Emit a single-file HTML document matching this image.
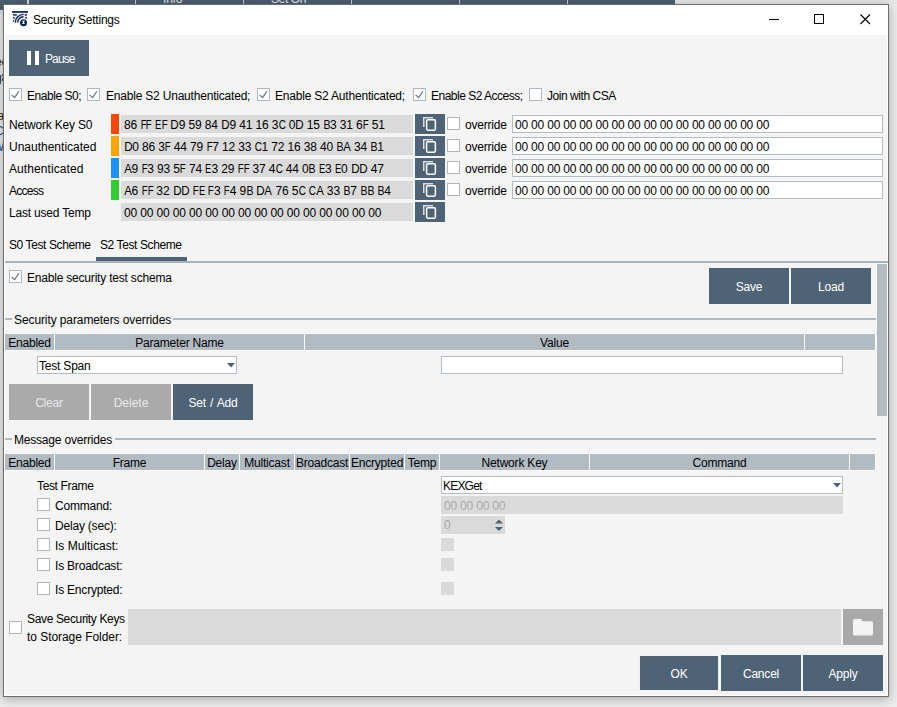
<!DOCTYPE html>
<html><head><meta charset="utf-8">
<style>
*{box-sizing:border-box;margin:0;padding:0}
html,body{width:897px;height:707px;overflow:hidden;background:#ececec;font-family:"Liberation Sans",sans-serif;font-size:11.5px;color:#000}
.a{position:absolute}
.t{position:absolute;white-space:pre;line-height:16px;font-size:12px;letter-spacing:-0.2px;margin-top:1px}
.cb{position:absolute;width:13px;height:13px;border:1px solid #aeb6be;background:#fff}
.c{position:absolute;white-space:pre;line-height:16px;text-align:center;overflow:hidden;font-size:12px;letter-spacing:-0.2px;margin-top:1px}
</style></head><body>

<div class="a" style="left:0px;top:0px;width:675px;height:4px;background:#4b5f72;"></div>
<div class="a" style="left:0px;top:0px;width:3px;height:10px;background:#4b5f72;"></div>
<div class="a" style="left:675px;top:0px;width:222px;height:4px;background:#e6e6e6;"></div>
<div class="a" style="left:27px;top:0px;width:2px;height:4px;background:#d8dde2;"></div>
<div class="a" style="left:135px;top:0px;width:1px;height:4px;background:#c8d0d8;"></div>
<div class="a" style="left:243px;top:0px;width:1px;height:4px;background:#c8d0d8;"></div>
<div class="a" style="left:351px;top:0px;width:1px;height:4px;background:#c8d0d8;"></div>
<div class="a" style="left:459px;top:0px;width:1px;height:4px;background:#c8d0d8;"></div>
<div class="a" style="left:567px;top:0px;width:1px;height:4px;background:#c8d0d8;"></div>
<div class="a" style="left:0;top:0;width:675px;height:4px;overflow:hidden"><div class="t" style="left:163px;top:-10px;color:#e3e8ec">Info</div><div class="t" style="left:271px;top:-10px;color:#e3e8ec;letter-spacing:-0.4px">Set On</div></div>
<div class="a" style="left:0px;top:10px;width:3px;height:4px;background:#dedede;"></div>
<div class="a" style="left:0;top:0;width:3px;height:707px;overflow:hidden"><div class="t" style="left:-5px;top:53px;color:#1a1a1a">ec</div><div class="t" style="left:-5px;top:69px;color:#1a1a1a">g8</div><div class="t" style="left:-5px;top:107px;color:#1a1a1a">la</div><div class="t" style="left:-5px;top:122px;color:#1f4e9a">C0</div><div class="t" style="left:-7px;top:138px;color:#1f4e9a">W</div></div>
<div class="a" style="left:3px;top:4px;width:886px;height:693px;background:#f4f4f4;border:1px solid #6e6e6e;box-shadow:0 2px 10px rgba(0,0,0,0.3)"></div>
<div class="a" style="left:4px;top:5px;width:884px;height:30px;background:#fff;"></div>
<div class="a" style="left:4px;top:35px;width:1px;height:660px;background:#fff;"></div>
<div class="a" style="left:4px;top:695px;width:884px;height:1px;background:#fff;"></div>
<div class="a" style="left:887px;top:35px;width:1px;height:660px;background:#fff;"></div>
<svg class="a" style="left:12px;top:11px" width="17" height="16" viewBox="0 0 17 16">
 <rect x="0.2" y="2" width="15.3" height="10.7" fill="#ebebeb"/>
 <rect x="0" y="0.1" width="16" height="1.7" fill="#0c2250"/>
 <rect x="1" y="3.2" width="3.8" height="1.4" fill="#0c2250"/>
 <rect x="12.7" y="3.2" width="2.3" height="1.4" fill="#0c2250"/>
 <rect x="1" y="6.2" width="1.7" height="1.4" fill="#0c2250"/>
 <rect x="13" y="6.2" width="2" height="1.4" fill="#0c2250"/>
 <rect x="1" y="9.2" width="1" height="1.5" fill="#0c2250"/>
 <path d="M3.3 11.6 A8.2 8.2 0 0 1 11.5 3.4" stroke="#0c2250" stroke-width="1.4" fill="none"/>
 <path d="M5.6 11.6 A5.9 5.9 0 0 1 11.5 5.7" stroke="#0c2250" stroke-width="1.4" fill="none"/>
 <circle cx="11.5" cy="11.65" r="4.4" fill="#fff"/>
 <circle cx="11.5" cy="11.65" r="3.5" fill="#0c2250"/>
 <path d="M9.9 9.7 H13.1 L11.9 11.4 L13.1 13.1 H9.9 L11.1 11.4z" fill="#fff"/>
</svg>
<div class="t" style="left:33px;top:11px;">Security Settings</div>
<div class="a" style="left:769px;top:19px;width:10px;height:1px;background:#000;"></div>
<div class="a" style="left:814px;top:14px;width:10px;height:10px;border:1px solid #000"></div>
<svg class="a" style="left:860px;top:14px" width="11" height="11" viewBox="0 0 11 11"><path d="M0.5 0.5 L10 10 M10 0.5 L0.5 10" stroke="#000" stroke-width="1.1"/></svg>
<div class="a" style="left:9px;top:40px;width:80px;height:36px;background:#4f6377;"></div>
<div class="a" style="left:27px;top:51px;width:4px;height:14px;background:#fff;"></div>
<div class="a" style="left:35px;top:51px;width:4px;height:14px;background:#fff;"></div>
<div class="t" style="left:45px;top:50px;color:#fff;letter-spacing:-0.9px">Pause</div>
<div class="cb" style="left:9px;top:88px"><svg width="11" height="11" style="position:absolute;left:0;top:0"><path d="M1.6 5.9 L4.6 8.6 L8.9 2.2" stroke="#5f7081" stroke-width="1.15" fill="none"/></svg></div>
<div class="t" style="left:27px;top:87px;letter-spacing:-0.45px">Enable S0;</div>
<div class="cb" style="left:87px;top:88px"><svg width="11" height="11" style="position:absolute;left:0;top:0"><path d="M1.6 5.9 L4.6 8.6 L8.9 2.2" stroke="#5f7081" stroke-width="1.15" fill="none"/></svg></div>
<div class="t" style="left:106px;top:87px;">Enable S2 Unauthenticated;</div>
<div class="cb" style="left:257px;top:88px"><svg width="11" height="11" style="position:absolute;left:0;top:0"><path d="M1.6 5.9 L4.6 8.6 L8.9 2.2" stroke="#5f7081" stroke-width="1.15" fill="none"/></svg></div>
<div class="t" style="left:275px;top:87px;">Enable S2 Authenticated;</div>
<div class="cb" style="left:413px;top:88px"><svg width="11" height="11" style="position:absolute;left:0;top:0"><path d="M1.6 5.9 L4.6 8.6 L8.9 2.2" stroke="#5f7081" stroke-width="1.15" fill="none"/></svg></div>
<div class="t" style="left:431px;top:87px;letter-spacing:-0.5px">Enable S2 Access;</div>
<div class="cb" style="left:529px;top:88px"></div>
<div class="t" style="left:547px;top:87px;letter-spacing:-0.45px">Join with CSA</div>
<div class="t" style="left:9px;top:116px;">Network Key S0</div>
<div class="a" style="left:111px;top:114px;width:8px;height:20px;background:#ff4500;"></div>
<div class="a" style="left:121px;top:115px;width:292px;height:18px;background:#dadada;"></div>
<div class="t" style="left:124px;top:116px;letter-spacing:0"><span style="position:absolute;left:-0.08px;top:0;">8</span><span style="position:absolute;left:6.43px;top:0;">6</span><span style="position:absolute;left:15.54px;top:0;transform:scaleX(0.805);transform-origin:3.67px 0;">F</span><span style="position:absolute;left:21.40px;top:0;transform:scaleX(0.805);transform-origin:3.67px 0;">F</span><span style="position:absolute;left:30.33px;top:0;transform:scaleX(0.775);transform-origin:4.00px 0;">E</span><span style="position:absolute;left:36.67px;top:0;transform:scaleX(0.805);transform-origin:3.67px 0;">F</span><span style="position:absolute;left:46.35px;top:0;transform:scaleX(0.969);transform-origin:4.33px 0;">D</span><span style="position:absolute;left:54.78px;top:0;">9</span><span style="position:absolute;left:64.55px;top:0;">5</span><span style="position:absolute;left:71.06px;top:0;">9</span><span style="position:absolute;left:80.83px;top:0;">8</span><span style="position:absolute;left:87.34px;top:0;">4</span><span style="position:absolute;left:97.02px;top:0;transform:scaleX(0.969);transform-origin:4.33px 0;">D</span><span style="position:absolute;left:105.45px;top:0;">9</span><span style="position:absolute;left:115.21px;top:0;">4</span><span style="position:absolute;left:121.73px;top:0;">1</span><span style="position:absolute;left:131.49px;top:0;">1</span><span style="position:absolute;left:138.01px;top:0;">6</span><span style="position:absolute;left:147.77px;top:0;">3</span><span style="position:absolute;left:153.60px;top:0;transform:scaleX(0.830);transform-origin:4.33px 0;">C</span><span style="position:absolute;left:164.69px;top:0;">0</span><span style="position:absolute;left:171.12px;top:0;transform:scaleX(0.969);transform-origin:4.33px 0;">D</span><span style="position:absolute;left:182.80px;top:0;">1</span><span style="position:absolute;left:189.31px;top:0;">5</span><span style="position:absolute;left:198.63px;top:0;transform:scaleX(0.874);transform-origin:4.00px 0;">B</span><span style="position:absolute;left:206.02px;top:0;">3</span><span style="position:absolute;left:215.79px;top:0;">3</span><span style="position:absolute;left:222.30px;top:0;">1</span><span style="position:absolute;left:232.07px;top:0;">6</span><span style="position:absolute;left:237.92px;top:0;transform:scaleX(0.805);transform-origin:3.67px 0;">F</span><span style="position:absolute;left:247.69px;top:0;">5</span><span style="position:absolute;left:254.20px;top:0;">1</span></div>
<div class="a" style="left:415px;top:114px;width:30px;height:20px;background:#4f6377"><svg width="30" height="20" style="position:absolute;left:0;top:0"><path d="M8.75 13 V3.75 H18" stroke="#fff" stroke-width="1.5" fill="none" opacity="0.78"/><rect x="11.6" y="5.85" width="8.8" height="10.3" rx="1.3" stroke="#fff" stroke-width="1.5" fill="none"/></svg></div>
<div class="cb" style="left:447px;top:117px"></div>
<div class="t" style="left:465px;top:116px;">override</div>
<div class="a" style="left:512px;top:115px;width:371px;height:18px;background:#fff;border:1px solid #b3bcc4"></div>
<div class="t" style="left:515px;top:116px;">00 00 00 00 00 00 00 00 00 00 00 00 00 00 00 00</div>
<div class="t" style="left:9px;top:138px;letter-spacing:0px">Unauthenticated</div>
<div class="a" style="left:111px;top:136px;width:8px;height:20px;background:#ffa500;"></div>
<div class="a" style="left:121px;top:137px;width:292px;height:18px;background:#dadada;"></div>
<div class="t" style="left:124px;top:138px;letter-spacing:0"><span style="position:absolute;left:-0.17px;top:0;transform:scaleX(0.969);transform-origin:4.33px 0;">D</span><span style="position:absolute;left:8.24px;top:0;">0</span><span style="position:absolute;left:17.99px;top:0;">8</span><span style="position:absolute;left:24.49px;top:0;">6</span><span style="position:absolute;left:34.24px;top:0;">3</span><span style="position:absolute;left:40.08px;top:0;transform:scaleX(0.805);transform-origin:3.67px 0;">F</span><span style="position:absolute;left:49.84px;top:0;">4</span><span style="position:absolute;left:56.34px;top:0;">4</span><span style="position:absolute;left:66.09px;top:0;">7</span><span style="position:absolute;left:72.59px;top:0;">9</span><span style="position:absolute;left:81.68px;top:0;transform:scaleX(0.805);transform-origin:3.67px 0;">F</span><span style="position:absolute;left:88.18px;top:0;">7</span><span style="position:absolute;left:97.93px;top:0;">1</span><span style="position:absolute;left:104.43px;top:0;">2</span><span style="position:absolute;left:114.19px;top:0;">3</span><span style="position:absolute;left:120.69px;top:0;">3</span><span style="position:absolute;left:129.75px;top:0;transform:scaleX(0.830);transform-origin:4.33px 0;">C</span><span style="position:absolute;left:137.57px;top:0;">1</span><span style="position:absolute;left:147.32px;top:0;">7</span><span style="position:absolute;left:153.82px;top:0;">2</span><span style="position:absolute;left:163.57px;top:0;">1</span><span style="position:absolute;left:170.07px;top:0;">6</span><span style="position:absolute;left:179.82px;top:0;">3</span><span style="position:absolute;left:186.32px;top:0;">8</span><span style="position:absolute;left:196.07px;top:0;">4</span><span style="position:absolute;left:202.57px;top:0;">0</span><span style="position:absolute;left:211.87px;top:0;transform:scaleX(0.874);transform-origin:4.00px 0;">B</span><span style="position:absolute;left:219.10px;top:0;transform:scaleX(0.950);transform-origin:4.00px 0;">A</span><span style="position:absolute;left:230.03px;top:0;">3</span><span style="position:absolute;left:236.53px;top:0;">4</span><span style="position:absolute;left:245.83px;top:0;transform:scaleX(0.874);transform-origin:4.00px 0;">B</span><span style="position:absolute;left:253.21px;top:0;">1</span></div>
<div class="a" style="left:415px;top:136px;width:30px;height:20px;background:#4f6377"><svg width="30" height="20" style="position:absolute;left:0;top:0"><path d="M8.75 13 V3.75 H18" stroke="#fff" stroke-width="1.5" fill="none" opacity="0.78"/><rect x="11.6" y="5.85" width="8.8" height="10.3" rx="1.3" stroke="#fff" stroke-width="1.5" fill="none"/></svg></div>
<div class="cb" style="left:447px;top:139px"></div>
<div class="t" style="left:465px;top:138px;">override</div>
<div class="a" style="left:512px;top:137px;width:371px;height:18px;background:#fff;border:1px solid #b3bcc4"></div>
<div class="t" style="left:515px;top:138px;">00 00 00 00 00 00 00 00 00 00 00 00 00 00 00 00</div>
<div class="t" style="left:9px;top:160px;letter-spacing:0.08px">Authenticated</div>
<div class="a" style="left:111px;top:158px;width:8px;height:20px;background:#1e90ff;"></div>
<div class="a" style="left:121px;top:159px;width:292px;height:18px;background:#dadada;"></div>
<div class="t" style="left:124px;top:160px;letter-spacing:0"><span style="position:absolute;left:-0.22px;top:0;transform:scaleX(0.950);transform-origin:4.00px 0;">A</span><span style="position:absolute;left:7.49px;top:0;">9</span><span style="position:absolute;left:16.62px;top:0;transform:scaleX(0.805);transform-origin:3.67px 0;">F</span><span style="position:absolute;left:23.14px;top:0;">3</span><span style="position:absolute;left:32.93px;top:0;">9</span><span style="position:absolute;left:39.46px;top:0;">3</span><span style="position:absolute;left:49.24px;top:0;">5</span><span style="position:absolute;left:55.11px;top:0;transform:scaleX(0.805);transform-origin:3.67px 0;">F</span><span style="position:absolute;left:64.90px;top:0;">7</span><span style="position:absolute;left:71.42px;top:0;">4</span><span style="position:absolute;left:80.37px;top:0;transform:scaleX(0.775);transform-origin:4.00px 0;">E</span><span style="position:absolute;left:87.38px;top:0;">3</span><span style="position:absolute;left:97.17px;top:0;">2</span><span style="position:absolute;left:103.69px;top:0;">9</span><span style="position:absolute;left:112.82px;top:0;transform:scaleX(0.805);transform-origin:3.67px 0;">F</span><span style="position:absolute;left:118.69px;top:0;transform:scaleX(0.805);transform-origin:3.67px 0;">F</span><span style="position:absolute;left:128.48px;top:0;">3</span><span style="position:absolute;left:135.00px;top:0;">7</span><span style="position:absolute;left:144.79px;top:0;">4</span><span style="position:absolute;left:150.63px;top:0;transform:scaleX(0.830);transform-origin:4.33px 0;">C</span><span style="position:absolute;left:161.74px;top:0;">4</span><span style="position:absolute;left:168.26px;top:0;">4</span><span style="position:absolute;left:178.05px;top:0;">0</span><span style="position:absolute;left:184.13px;top:0;transform:scaleX(0.874);transform-origin:4.00px 0;">B</span><span style="position:absolute;left:193.95px;top:0;transform:scaleX(0.775);transform-origin:4.00px 0;">E</span><span style="position:absolute;left:200.96px;top:0;">3</span><span style="position:absolute;left:209.90px;top:0;transform:scaleX(0.775);transform-origin:4.00px 0;">E</span><span style="position:absolute;left:216.91px;top:0;">0</span><span style="position:absolute;left:226.62px;top:0;transform:scaleX(0.969);transform-origin:4.33px 0;">D</span><span style="position:absolute;left:234.97px;top:0;transform:scaleX(0.969);transform-origin:4.33px 0;">D</span><span style="position:absolute;left:246.67px;top:0;">4</span><span style="position:absolute;left:253.20px;top:0;">7</span></div>
<div class="a" style="left:415px;top:158px;width:30px;height:20px;background:#4f6377"><svg width="30" height="20" style="position:absolute;left:0;top:0"><path d="M8.75 13 V3.75 H18" stroke="#fff" stroke-width="1.5" fill="none" opacity="0.78"/><rect x="11.6" y="5.85" width="8.8" height="10.3" rx="1.3" stroke="#fff" stroke-width="1.5" fill="none"/></svg></div>
<div class="cb" style="left:447px;top:161px"></div>
<div class="t" style="left:465px;top:160px;">override</div>
<div class="a" style="left:512px;top:159px;width:371px;height:18px;background:#fff;border:1px solid #b3bcc4"></div>
<div class="t" style="left:515px;top:160px;">00 00 00 00 00 00 00 00 00 00 00 00 00 00 00 00</div>
<div class="t" style="left:9px;top:182px;letter-spacing:-0.75px">Access</div>
<div class="a" style="left:111px;top:180px;width:8px;height:20px;background:#32cd32;"></div>
<div class="a" style="left:121px;top:181px;width:292px;height:18px;background:#dadada;"></div>
<div class="t" style="left:124px;top:182px;letter-spacing:0"><span style="position:absolute;left:-0.21px;top:0;transform:scaleX(0.950);transform-origin:4.00px 0;">A</span><span style="position:absolute;left:7.52px;top:0;">6</span><span style="position:absolute;left:16.67px;top:0;transform:scaleX(0.805);transform-origin:3.67px 0;">F</span><span style="position:absolute;left:22.55px;top:0;transform:scaleX(0.805);transform-origin:3.67px 0;">F</span><span style="position:absolute;left:32.37px;top:0;">3</span><span style="position:absolute;left:38.91px;top:0;">2</span><span style="position:absolute;left:48.64px;top:0;transform:scaleX(0.969);transform-origin:4.33px 0;">D</span><span style="position:absolute;left:57.02px;top:0;transform:scaleX(0.969);transform-origin:4.33px 0;">D</span><span style="position:absolute;left:68.09px;top:0;transform:scaleX(0.805);transform-origin:3.67px 0;">F</span><span style="position:absolute;left:73.79px;top:0;transform:scaleX(0.775);transform-origin:4.00px 0;">E</span><span style="position:absolute;left:83.43px;top:0;transform:scaleX(0.805);transform-origin:3.67px 0;">F</span><span style="position:absolute;left:89.97px;top:0;">3</span><span style="position:absolute;left:99.12px;top:0;transform:scaleX(0.805);transform-origin:3.67px 0;">F</span><span style="position:absolute;left:105.67px;top:0;">4</span><span style="position:absolute;left:115.48px;top:0;">9</span><span style="position:absolute;left:121.57px;top:0;transform:scaleX(0.874);transform-origin:4.00px 0;">B</span><span style="position:absolute;left:132.18px;top:0;transform:scaleX(0.969);transform-origin:4.33px 0;">D</span><span style="position:absolute;left:140.49px;top:0;transform:scaleX(0.950);transform-origin:4.00px 0;">A</span><span style="position:absolute;left:151.49px;top:0;">7</span><span style="position:absolute;left:158.03px;top:0;">6</span><span style="position:absolute;left:167.85px;top:0;">5</span><span style="position:absolute;left:173.71px;top:0;transform:scaleX(0.830);transform-origin:4.33px 0;">C</span><span style="position:absolute;left:184.16px;top:0;transform:scaleX(0.830);transform-origin:4.33px 0;">C</span><span style="position:absolute;left:191.87px;top:0;transform:scaleX(0.950);transform-origin:4.00px 0;">A</span><span style="position:absolute;left:202.87px;top:0;">3</span><span style="position:absolute;left:209.41px;top:0;">3</span><span style="position:absolute;left:218.77px;top:0;transform:scaleX(0.874);transform-origin:4.00px 0;">B</span><span style="position:absolute;left:226.20px;top:0;">7</span><span style="position:absolute;left:235.56px;top:0;transform:scaleX(0.874);transform-origin:4.00px 0;">B</span><span style="position:absolute;left:242.53px;top:0;transform:scaleX(0.874);transform-origin:4.00px 0;">B</span><span style="position:absolute;left:252.77px;top:0;transform:scaleX(0.874);transform-origin:4.00px 0;">B</span><span style="position:absolute;left:260.19px;top:0;">4</span></div>
<div class="a" style="left:415px;top:180px;width:30px;height:20px;background:#4f6377"><svg width="30" height="20" style="position:absolute;left:0;top:0"><path d="M8.75 13 V3.75 H18" stroke="#fff" stroke-width="1.5" fill="none" opacity="0.78"/><rect x="11.6" y="5.85" width="8.8" height="10.3" rx="1.3" stroke="#fff" stroke-width="1.5" fill="none"/></svg></div>
<div class="cb" style="left:447px;top:183px"></div>
<div class="t" style="left:465px;top:182px;">override</div>
<div class="a" style="left:512px;top:181px;width:371px;height:18px;background:#fff;border:1px solid #b3bcc4"></div>
<div class="t" style="left:515px;top:182px;">00 00 00 00 00 00 00 00 00 00 00 00 00 00 00 00</div>
<div class="t" style="left:9px;top:204px;">Last used Temp</div>
<div class="a" style="left:121px;top:203px;width:292px;height:18px;background:#dadada;"></div>
<div class="t" style="left:124px;top:204px;letter-spacing:0"><span style="position:absolute;left:-0.08px;top:0;">0</span><span style="position:absolute;left:6.44px;top:0;">0</span><span style="position:absolute;left:16.21px;top:0;">0</span><span style="position:absolute;left:22.72px;top:0;">0</span><span style="position:absolute;left:32.49px;top:0;">0</span><span style="position:absolute;left:39.00px;top:0;">0</span><span style="position:absolute;left:48.78px;top:0;">0</span><span style="position:absolute;left:55.29px;top:0;">0</span><span style="position:absolute;left:65.06px;top:0;">0</span><span style="position:absolute;left:71.57px;top:0;">0</span><span style="position:absolute;left:81.34px;top:0;">0</span><span style="position:absolute;left:87.86px;top:0;">0</span><span style="position:absolute;left:97.63px;top:0;">0</span><span style="position:absolute;left:104.14px;top:0;">0</span><span style="position:absolute;left:113.91px;top:0;">0</span><span style="position:absolute;left:120.43px;top:0;">0</span><span style="position:absolute;left:130.20px;top:0;">0</span><span style="position:absolute;left:136.71px;top:0;">0</span><span style="position:absolute;left:146.48px;top:0;">0</span><span style="position:absolute;left:153.00px;top:0;">0</span><span style="position:absolute;left:162.77px;top:0;">0</span><span style="position:absolute;left:169.28px;top:0;">0</span><span style="position:absolute;left:179.05px;top:0;">0</span><span style="position:absolute;left:185.56px;top:0;">0</span><span style="position:absolute;left:195.34px;top:0;">0</span><span style="position:absolute;left:201.85px;top:0;">0</span><span style="position:absolute;left:211.62px;top:0;">0</span><span style="position:absolute;left:218.13px;top:0;">0</span><span style="position:absolute;left:227.90px;top:0;">0</span><span style="position:absolute;left:234.42px;top:0;">0</span><span style="position:absolute;left:244.19px;top:0;">0</span><span style="position:absolute;left:250.70px;top:0;">0</span></div>
<div class="a" style="left:415px;top:202px;width:30px;height:20px;background:#4f6377"><svg width="30" height="20" style="position:absolute;left:0;top:0"><path d="M8.75 13 V3.75 H18" stroke="#fff" stroke-width="1.5" fill="none" opacity="0.78"/><rect x="11.6" y="5.85" width="8.8" height="10.3" rx="1.3" stroke="#fff" stroke-width="1.5" fill="none"/></svg></div>
<div class="t" style="left:9px;top:236px;letter-spacing:-0.4px">S0 Test Scheme</div>
<div class="t" style="left:100px;top:236px;letter-spacing:-0.4px">S2 Test Scheme</div>
<div class="a" style="left:96px;top:257px;width:91px;height:4px;background:#4f6377;"></div>
<div class="a" style="left:5px;top:261px;width:883px;height:2px;background:#aab3bc;"></div>
<div class="a" style="left:877px;top:264px;width:10px;height:152px;background:#b2bac2;"></div>
<div class="cb" style="left:9px;top:270px"><svg width="11" height="11" style="position:absolute;left:0;top:0"><path d="M1.6 5.9 L4.6 8.6 L8.9 2.2" stroke="#5f7081" stroke-width="1.15" fill="none"/></svg></div>
<div class="t" style="left:27px;top:269px;">Enable security test schema</div>
<div class="a" style="left:709px;top:268px;width:80px;height:36px;background:#4f6377;"></div>
<div class="c" style="left:709px;top:278px;width:80px;color:#fff">Save</div>
<div class="a" style="left:791px;top:268px;width:80px;height:36px;background:#4f6377;"></div>
<div class="c" style="left:791px;top:278px;width:80px;color:#fff">Load</div>
<div class="a" style="left:5px;top:318px;width:7px;height:2px;background:#b0b8c0;"></div>
<div class="t" style="left:14px;top:311px;letter-spacing:-0.1px">Security parameters overrides</div>
<div class="a" style="left:173px;top:318px;width:703px;height:2px;background:#b0b8c0;"></div>
<div class="a" style="left:4px;top:333px;width:872px;height:18px;background:#fcfcfc;"></div>
<div class="a" style="left:5px;top:334px;width:49px;height:16px;background:#b2bac2;"></div>
<div class="c" style="left:5px;top:334px;width:49px">Enabled</div>
<div class="a" style="left:55px;top:334px;width:249px;height:16px;background:#b2bac2;"></div>
<div class="c" style="left:55px;top:334px;width:249px">Parameter Name</div>
<div class="a" style="left:305px;top:334px;width:499px;height:16px;background:#b2bac2;"></div>
<div class="c" style="left:305px;top:334px;width:499px">Value</div>
<div class="a" style="left:805px;top:334px;width:70px;height:16px;background:#b2bac2;"></div>
<div class="a" style="left:37px;top:356px;width:200px;height:18px;background:#fff;border:1px solid #b3bcc4"></div>
<div class="t" style="left:39px;top:357px;">Test Span</div>
<svg class="a" style="left:227px;top:363px" width="8" height="5"><path d="M0 0 H8 L4 4.5z" fill="#4d6175"/></svg>
<div class="a" style="left:441px;top:356px;width:402px;height:18px;background:#fff;border:1px solid #b3bcc4"></div>
<div class="a" style="left:9px;top:384px;width:80px;height:36px;background:#aaaaaa;"></div>
<div class="c" style="left:9px;top:394px;width:80px;color:#e8e8e8">Clear</div>
<div class="a" style="left:91px;top:384px;width:80px;height:36px;background:#aaaaaa;"></div>
<div class="c" style="left:91px;top:394px;width:80px;color:#e8e8e8;letter-spacing:0px">Delete</div>
<div class="a" style="left:173px;top:384px;width:80px;height:36px;background:#4f6377;"></div>
<div class="c" style="left:173px;top:394px;width:80px;color:#fff;word-spacing:1px">Set / Add</div>
<div class="a" style="left:5px;top:438px;width:7px;height:2px;background:#b0b8c0;"></div>
<div class="t" style="left:14px;top:431px;">Message overrides</div>
<div class="a" style="left:115px;top:438px;width:761px;height:2px;background:#b0b8c0;"></div>
<div class="a" style="left:4px;top:453px;width:872px;height:18px;background:#fcfcfc;"></div>
<div class="a" style="left:5px;top:454px;width:49px;height:16px;background:#b2bac2;"></div>
<div class="c" style="left:5px;top:454px;width:49px">Enabled</div>
<div class="a" style="left:55px;top:454px;width:149px;height:16px;background:#b2bac2;"></div>
<div class="c" style="left:55px;top:454px;width:149px">Frame</div>
<div class="a" style="left:205px;top:454px;width:34px;height:16px;background:#b2bac2;"></div>
<div class="c" style="left:205px;top:454px;width:34px">Delay</div>
<div class="a" style="left:240px;top:454px;width:54px;height:16px;background:#b2bac2;"></div>
<div class="c" style="left:240px;top:454px;width:54px">Multicast</div>
<div class="a" style="left:295px;top:454px;width:54px;height:16px;background:#b2bac2;"></div>
<div class="c" style="left:295px;top:454px;width:54px">Broadcast</div>
<div class="a" style="left:350px;top:454px;width:54px;height:16px;background:#b2bac2;"></div>
<div class="c" style="left:350px;top:454px;width:54px">Encrypted</div>
<div class="a" style="left:405px;top:454px;width:34px;height:16px;background:#b2bac2;"></div>
<div class="c" style="left:405px;top:454px;width:34px">Temp</div>
<div class="a" style="left:440px;top:454px;width:149px;height:16px;background:#b2bac2;"></div>
<div class="c" style="left:440px;top:454px;width:149px">Network Key</div>
<div class="a" style="left:590px;top:454px;width:259px;height:16px;background:#b2bac2;"></div>
<div class="c" style="left:590px;top:454px;width:259px">Command</div>
<div class="a" style="left:850px;top:454px;width:25px;height:16px;background:#b2bac2;"></div>
<div class="t" style="left:37px;top:477px;letter-spacing:-0.35px">Test Frame</div>
<div class="cb" style="left:37px;top:498px"></div>
<div class="t" style="left:55px;top:497px;">Command:</div>
<div class="cb" style="left:37px;top:518px"></div>
<div class="t" style="left:55px;top:517px;">Delay (sec):</div>
<div class="cb" style="left:37px;top:538px"></div>
<div class="t" style="left:55px;top:537px;letter-spacing:0px">Is Multicast:</div>
<div class="cb" style="left:37px;top:558px"></div>
<div class="t" style="left:55px;top:557px;">Is Broadcast:</div>
<div class="cb" style="left:37px;top:582px"></div>
<div class="t" style="left:55px;top:581px;">Is Encrypted:</div>
<div class="a" style="left:441px;top:476px;width:402px;height:18px;background:#fff;border:1px solid #b3bcc4"></div>
<div class="t" style="left:443px;top:477px;letter-spacing:-0.8px">KEXGet</div>
<svg class="a" style="left:833px;top:483px" width="8" height="5"><path d="M0 0 H8 L4 4.5z" fill="#4d6175"/></svg>
<div class="a" style="left:441px;top:496px;width:402px;height:18px;background:#dadada;"></div>
<div class="t" style="left:444px;top:497px;color:#a8a8a8">00 00 00 00</div>
<div class="a" style="left:441px;top:516px;width:64px;height:18px;background:#dadada;"></div>
<div class="t" style="left:444px;top:516px;color:#a8a8a8">0</div>
<svg class="a" style="left:494px;top:519px" width="10" height="13"><path d="M1 4.5 L5 0.5 L9 4.5z M1 8 L5 12 L9 8z" fill="#4d6175"/></svg>
<div class="a" style="left:441px;top:538px;width:13px;height:13px;background:#dadada;"></div>
<div class="a" style="left:441px;top:558px;width:13px;height:13px;background:#dadada;"></div>
<div class="a" style="left:441px;top:582px;width:13px;height:13px;background:#dadada;"></div>
<div class="cb" style="left:9px;top:621px"></div>
<div class="t" style="left:27px;top:610px;letter-spacing:-0.35px">Save Security Keys</div>
<div class="t" style="left:27px;top:628px;letter-spacing:-0.05px">to Storage Folder:</div>
<div class="a" style="left:128px;top:609px;width:713px;height:36px;background:#dadada;"></div>
<div class="a" style="left:843px;top:609px;width:40px;height:36px;background:#a9a9a9;"></div>
<svg class="a" style="left:853px;top:618.5px" width="20" height="17"><path d="M1.5 0 H7.8 L9.8 2.3 H18.5 Q20 2.3 20 3.8 V15 Q20 16.5 18.5 16.5 H1.5 Q0 16.5 0 15 V1.5 Q0 0 1.5 0z" fill="#f3f3f3"/></svg>
<div class="a" style="left:639px;top:655px;width:80px;height:36px;background:#4f6377;border:1px solid #f0f0f0"></div>
<div class="c" style="left:640px;top:665px;width:78px;color:#fff">OK</div>
<div class="a" style="left:721px;top:655px;width:80px;height:36px;background:#4f6377;"></div>
<div class="c" style="left:721px;top:665px;width:80px;color:#fff">Cancel</div>
<div class="a" style="left:803px;top:655px;width:80px;height:36px;background:#4f6377;"></div>
<div class="c" style="left:803px;top:665px;width:80px;color:#fff">Apply</div>
</body></html>
